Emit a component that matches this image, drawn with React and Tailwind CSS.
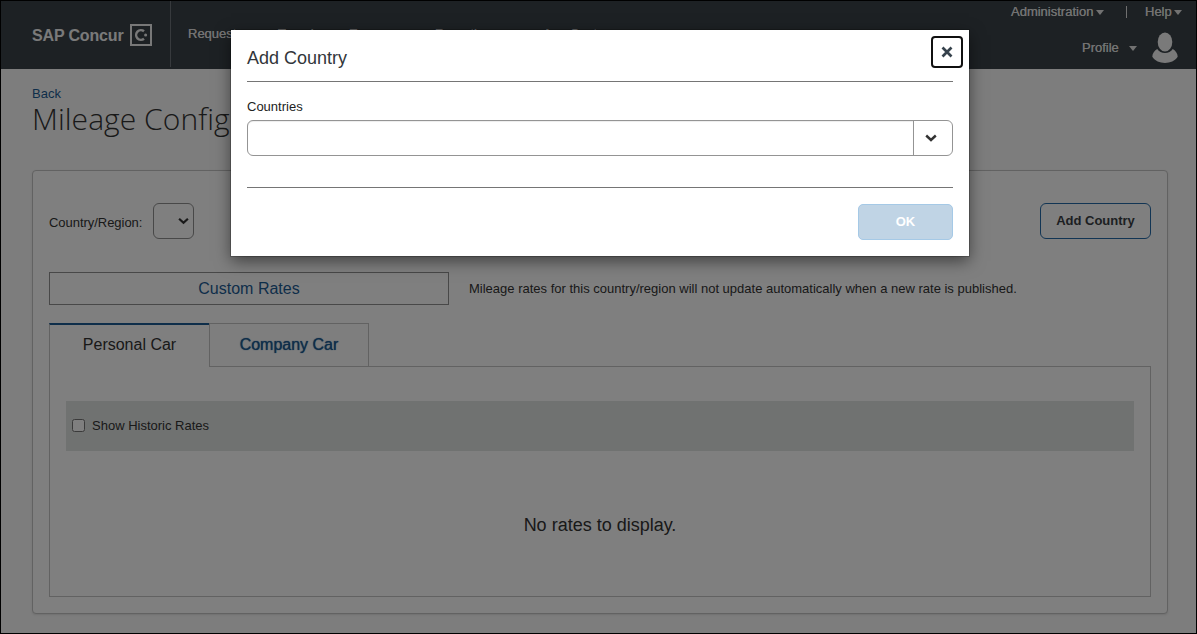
import React from "react";

function Caret({ className = "" }) {
  return (
    <svg className={className} width="8" height="5" viewBox="0 0 8 5">
      <path d="M0 0h8L4 5z" fill="currentColor" />
    </svg>
  );
}

function Header() {
  return (
    <header className="flex h-[69px] shrink-0 bg-[#3a4248] text-[13px] text-[#e4e4e4]">
      <div className="mt-px flex h-[66px] w-[171px] shrink-0 items-center border-r border-[#6f757a] pt-[2px] pl-[32px]">
        <span className="w-[98px] pt-px text-[16px] leading-5 font-bold tracking-[-0.15px] whitespace-nowrap text-[#f4f4f4]">SAP Concur</span>
        <svg width="22" height="22" viewBox="0 0 22 22" fill="none">
          <rect x="1" y="1" width="20" height="20" stroke="#f0f0f0" strokeWidth="2" />
          <path d="M14 7.300A4.800 4.800 0 1 0 14 14.700" stroke="#f0f0f0" strokeWidth="2.500" />
          <circle cx="15.600" cy="11" r="1.500" fill="#f0f0f0" />
        </svg>
      </div>
      <nav className="flex flex-1 pt-[26px] pl-[17px] leading-4 [text-shadow:0_0_0.5px_#e4e4e4]">
        <span className="w-[90px]">Requests</span>
        <span className="w-[71px]">Travel</span>
        <span className="w-[86px]">Expense</span>
        <span className="w-[108px]">Reporting</span>
        <span>App Center</span>
      </nav>
      <div className="flex w-[240px] flex-col pt-[4px] [text-shadow:0_0_0.5px_#e4e4e4]">
        <div className="flex h-4 items-center pl-[54px] leading-4">
          <span className="w-[83px]">Administration</span>
          <Caret className="mt-px ml-[2px]" />
          <span className="-mt-px ml-[22px] h-3 w-px bg-[#e0e0e0]" />
          <span className="ml-[18px] w-[27px]">Help</span>
          <Caret className="mt-px ml-[2px]" />
        </div>
        <div className="mt-[12px] flex h-8 items-center pl-[125px] leading-4">
          <span className="w-[37px]">Profile</span>
          <Caret className="ml-[10px]" />
          <svg className="ml-[15px]" width="26" height="32" viewBox="0 0 26 32" fill="#f4f4f4">
            <ellipse cx="13" cy="10" rx="7.300" ry="9.500" />
            <path d="M5.200 17C2.200 18.700.3 21.800.3 24.800 3 29 7.800 31 13 31s10-2 12.700-6.200c0-3-1.900-6.100-4.900-7.800-1.800 2.700-4.600 4.100-7.800 4.100s-6-1.400-7.800-4.100z" />
          </svg>
        </div>
      </div>
    </header>
  );
}

function Chevron({ width = 12, height = 8 }) {
  return (
    <svg width={width} height={height} viewBox="0 0 12 8" fill="none">
      <path d="M1.200 1.500 6 6 10.800 1.500" stroke="#333" strokeWidth="2.400" />
    </svg>
  );
}

function RatesCard() {
  return (
    <section className="mt-[30px] mr-[29px] ml-[32px] h-[444px] rounded-[4px] border border-[#c4c4c4] bg-white px-4 pt-8 shadow-[0_1px_2px_rgba(0,0,0,0.1)]">
      <div className="flex h-9 items-center">
        <span className="w-[104px] pt-[3px] text-[13px] leading-4 tracking-[-0.04px]">Country/Region:</span>
        <div className="flex h-9 w-[41px] items-center justify-end rounded-[6px] border border-[#909090] pr-[4px]">
          <Chevron width={11} />
        </div>
        <button className="ml-auto h-9 w-[111px] rounded-[6px] border border-[#256aa8] pb-px text-[13px] font-bold text-[#3a3f45]">
          Add Country
        </button>
      </div>
      <div className="mt-[33px] flex h-[33px] items-center">
        <div className="flex h-[33px] w-[400px] items-center justify-center border border-[#909090] text-[16px] leading-5 text-[#1d5c94]">
          Custom Rates
        </div>
        <span className="ml-5 text-[13px] leading-4 whitespace-nowrap">
          Mileage rates for this country/region will not update automatically when a new rate is published.
        </span>
      </div>
      <div className="mt-[18px] flex h-11 text-[16px]">
        <div className="flex w-[160px] items-center justify-center border-t-2 border-l border-t-[#1d5c94] border-l-[#c4c4c4] pb-[3px]">
          Personal Car
        </div>
        <div className="flex w-[160px] items-center justify-center border border-[#c4c4c4] bg-[#fcfcfc] text-[#1d5c94] [text-shadow:0_0_1px_#1d5c94]">
          Company Car
        </div>
        <div className="flex-1 border-b border-[#c4c4c4]" />
      </div>
      <div className="h-[230px] border border-t-0 border-[#c4c4c4] px-4 pt-[34px]">
        <div className="flex h-[50px] items-center bg-[#e0e4e2] pl-[6px]">
          <span className="-mt-[2px] h-[13px] w-[13px] rounded-[2.500px] border border-[#767676] bg-white" />
          <span className="ml-[7px] text-[13px] leading-4">Show Historic Rates</span>
        </div>
        <div className="mt-[62px] text-center text-[18px] leading-6">No rates to display.</div>
      </div>
    </section>
  );
}

function AddCountryDialog() {
  return (
    <div className="absolute top-[30px] left-[231px] h-[226px] w-[738px] bg-white px-4 text-[#32363a] shadow-[0_0_0_1px_rgba(0,0,0,0.2),0_5px_15px_rgba(0,0,0,0.500)]">
      <div className="flex h-[52px] justify-between border-b border-[#757575]">
        <h2 className="pt-4 text-[18px] leading-6">Add Country</h2>
        <button className="mt-[6px] -mr-[10px] flex h-8 w-8 items-center justify-center rounded-[4px] border-2 border-[#101010]">
          <svg width="12" height="12" viewBox="0 0 12 12" fill="none">
            <path d="M1.500 1.500 10.500 10.500M10.500 1.500 1.500 10.500" stroke="#36424c" strokeWidth="2.700" />
          </svg>
        </button>
      </div>
      <div className="mt-4 text-[13px] leading-[18px] text-[#222]">Countries</div>
      <div className="mt-1 flex h-9 rounded-[6px] border border-[#949494]">
        <div className="flex-1 rounded-l-[5px] border-r border-[#949494] shadow-[inset_0_1px_1px_rgba(0,0,0,0.075)]" />
        <div className="flex w-[38px] items-center pl-[11px]">
          <Chevron />
        </div>
      </div>
      <div className="mt-[31px] flex justify-end border-t border-[#757575] pt-4">
        <button className="h-9 w-[95px] rounded-[5px] border border-[#a5c9e6] bg-[#c0d4e5] pb-px text-[13px] font-bold text-white">
          OK
        </button>
      </div>
    </div>
  );
}

export default function App() {
  return (
    <div className="relative flex h-[634px] w-[1197px] flex-col overflow-hidden bg-[#fafafa] font-['Liberation_Sans',Arial,sans-serif] text-[#333]">
      <Header />
      <div className="pt-[17px] pl-[32px]">
        <a className="block text-[13px] leading-4 text-[#1d5c94]">Back</a>
        <h1 className="h-[38px] font-['Open_Sans',sans-serif] text-[30px] leading-[34px] font-light tracking-[0.05px] whitespace-nowrap">
          Mileage Configuration
        </h1>
      </div>
      <RatesCard />
      <div className="absolute inset-0 border border-black bg-black/50" />
      <AddCountryDialog />
    </div>
  );
}
